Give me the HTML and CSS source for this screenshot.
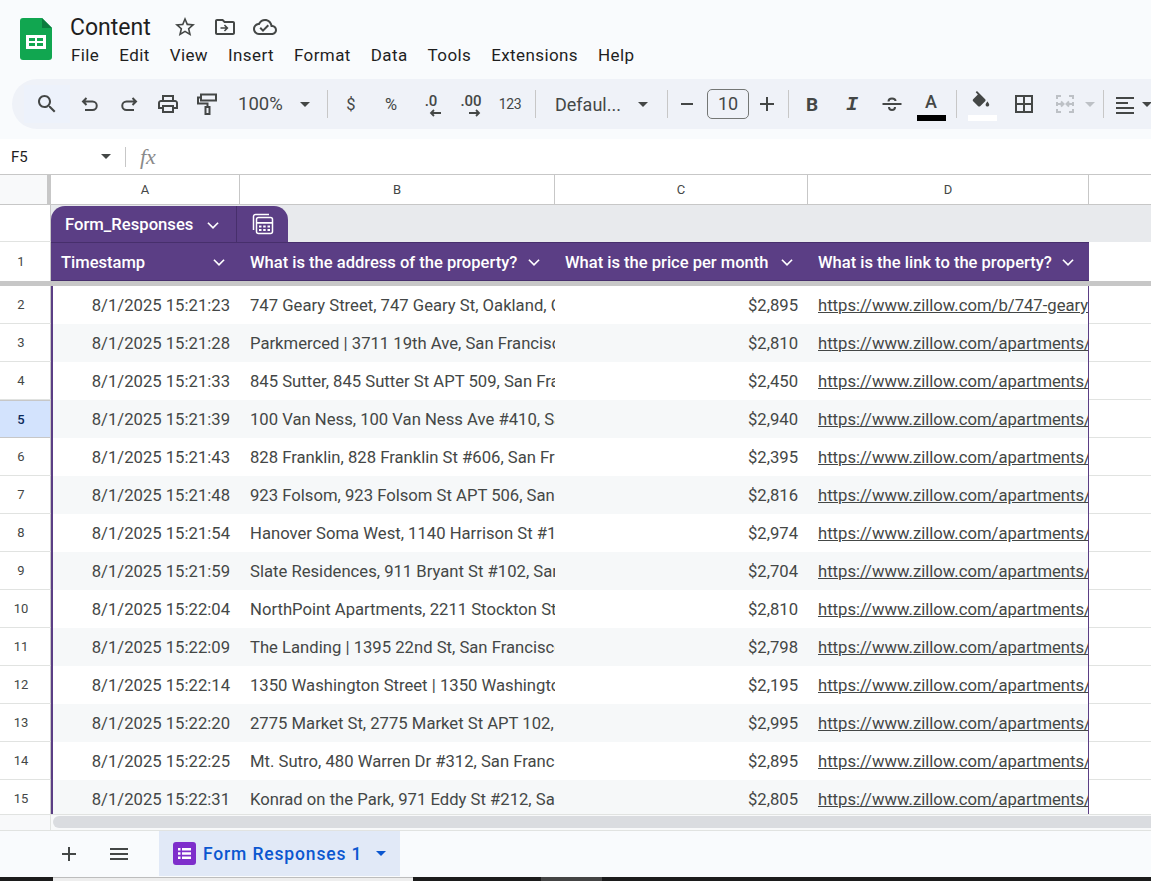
FILE: index.html
```html
<!DOCTYPE html>
<html>
<head>
<meta charset="utf-8" />
<title>Content - Google Sheets</title>
<link rel="stylesheet" href="styles.css">
</head>
<body>
<div class="app">

<div class="topbar">
	<svg class="logo" width="32" height="42" viewBox="0 0 32 42">
		<path d="M3 0h19l10 10v29a3 3 0 0 1-3 3H3a3 3 0 0 1-3-3V3a3 3 0 0 1 3-3z" fill="#11a650"/>
		<path d="M22 0l10 10H22z" fill="#0b7c3e"/>
		<path d="M6 17h20v14H6z" fill="#fff"/>
		<path d="M9 20h6v3H9zM17 20h6v3h-6zM9 25h6v3H9zM17 25h6v3h-6z" fill="#11a650"/>
	</svg>
	<div class="titles">
		<div class="title-row">
			<span class="doc-title">Content</span>
			<svg width="24" height="24" viewBox="0 0 24 24"><path d="M22 9.24l-7.19-.62L12 2 9.19 8.63 2 9.24l5.46 4.73L5.82 21 12 17.27 18.18 21l-1.63-7.03L22 9.24zM12 15.4l-3.76 2.27 1-4.28-3.32-2.88 4.38-.38L12 6.1l1.71 4.04 4.38.38-3.32 2.88 1 4.28L12 15.4z"/></svg>
			<svg class="title-icon" width="24" height="24" viewBox="0 0 24 24"><path d="M20 6h-8l-2-2H4c-1.1 0-2 .9-2 2v12c0 1.1.9 2 2 2h16c1.1 0 2-.9 2-2V8c0-1.1-.9-2-2-2zm0 12H4V6h5.17l2 2H20v10z"/><path d="M12 9.5l-1.1 1.1 1.6 1.6H7.5v1.6h5l-1.6 1.6L12 16.5l3.5-3.5z"/></svg>
			<svg class="title-icon" width="24" height="24" viewBox="0 0 24 24"><path d="M19.35 10.04C18.67 6.59 15.64 4 12 4 9.11 4 6.6 5.64 5.35 8.04 2.34 8.36 0 10.91 0 14c0 3.31 2.69 6 6 6h13c2.76 0 5-2.24 5-5 0-2.64-2.05-4.78-4.65-4.96zM19 18H6c-2.21 0-4-1.79-4-4 0-2.05 1.53-3.76 3.56-3.97l1.07-.11.5-.95C8.08 7.14 9.94 6 12 6c2.62 0 4.88 1.86 5.39 4.43l.3 1.5 1.53.11c1.56.1 2.78 1.41 2.78 2.96 0 1.65-1.35 3-3 3zm-9-3.82l-2.09-2.09L6.5 13.5 10 17l6.01-6.01-1.41-1.41z"/></svg>
		</div>
		<div class="menu">
			<span>File</span><span>Edit</span><span>View</span><span>Insert</span><span>Format</span><span>Data</span><span>Tools</span><span>Extensions</span><span>Help</span>
		</div>
	</div>
</div>

<div class="toolbar">
	<div class="tb search"><svg width="24" height="24" viewBox="0 0 24 24"><path d="M15.5 14h-.79l-.28-.27C15.41 12.59 16 11.11 16 9.5 16 5.91 13.09 3 9.5 3S3 5.91 3 9.5 5.91 16 9.5 16c1.61 0 3.09-.59 4.23-1.57l.27.28v.79l5 4.99L20.49 19l-4.99-5zm-6 0C7.01 14 5 11.99 5 9.5S7.01 5 9.5 5 14 7.01 14 9.5 11.99 14 9.5 14z"/></svg></div>
	<div class="tb"><svg class="line" width="24" height="24" viewBox="0 0 24 24"><path d="M8.5 6 5 9.5 8.5 13M5 9.5h9.5a4.25 4.25 0 0 1 0 8.5H7"/></svg></div>
	<div class="tb"><svg class="line" width="24" height="24" viewBox="0 0 24 24"><path d="M15.5 6 19 9.5 15.5 13M19 9.5H9.5a4.25 4.25 0 0 0 0 8.5H17"/></svg></div>
	<div class="tb"><svg width="24" height="24" viewBox="0 0 24 24"><path d="M19 8h-1V3H6v5H5c-1.66 0-3 1.34-3 3v6h4v4h12v-4h4v-6c0-1.66-1.34-3-3-3zM8 5h8v3H8V5zm8 12v2H8v-4h8v2zm2-2v-2H6v2H4v-4c0-.55.45-1 1-1h14c.55 0 1 .45 1 1v4h-2z"/></svg></div>
	<div class="tb"><svg class="line" width="24" height="24" viewBox="0 0 24 24"><rect x="6" y="2.5" width="15" height="6"/><path d="M6 5.5H3v6h9.5V15"/><rect x="10.5" y="15" width="4" height="7"/></svg></div>
	<div class="tb zoom"><span>100%</span><i class="caret"></i></div>
	<div class="sep sep-a"></div>
	<div class="tb txt">$</div>
	<div class="tb txt">%</div>
	<div class="tb dec"><b>.0</b><svg width="14" height="8" viewBox="0 0 14 8"><path d="M13 4H3M6 1 3 4l3 3"/></svg></div>
	<div class="tb dec"><b>.00</b><svg width="14" height="8" viewBox="0 0 14 8"><path d="M1 4h10M8 1l3 3-3 3"/></svg></div>
	<div class="tb txt small">123</div>
	<div class="sep sep-b"></div>
	<div class="tb font"><span>Defaul...</span><i class="caret"></i></div>
	<div class="sep sep-c"></div>
	<div class="tb size-btn"><svg width="24" height="24" viewBox="0 0 24 24"><path d="M6 11h12v2H6z"/></svg></div>
	<div class="size-box">10</div>
	<div class="tb size-btn"><svg width="24" height="24" viewBox="0 0 24 24"><path d="M11 5h2v6h6v2h-6v6h-2v-6H5v-2h6z"/></svg></div>
	<div class="sep sep-d"></div>
	<div class="tb fmt bold">B</div>
	<div class="tb fmt ital">I</div>
	<div class="tb"><svg class="line" width="24" height="24" viewBox="0 0 24 24"><path d="M2.5 12h19M8.5 9.500C8.500 7.500 10 6.500 12 6.500s3.500 1 3.500 2.500M9 15c0 2 1.200 3 3 3s3-1 3-3"/></svg></div>
	<div class="tb color"><span>A</span><i class="bar black"></i></div>
	<div class="sep sep-e"></div>
	<div class="tb color"><svg width="24" height="24" viewBox="0 0 24 24"><path d="M16.56 8.94 7.62 0 6.21 1.41l2.38 2.38-5.15 5.15c-.59.59-.59 1.54 0 2.12l5.5 5.5c.29.29.68.44 1.06.44s.77-.15 1.06-.44l5.5-5.5c.59-.58.59-1.53 0-2.12zM19 11.5s-2 2.17-2 3.5c0 1.1.9 2 2 2s2-.9 2-2c0-1.33-2-3.5-2-3.5z"/></svg><i class="bar white"></i></div>
	<div class="tb borders"><svg width="24" height="24" viewBox="0 0 24 24"><path d="M3 3v18h18V3H3zm8 16H5v-6h6v6zm0-8H5V5h6v6zm8 8h-6v-6h6v6zm0-8h-6V5h6v6z"/></svg></div>
	<div class="tb merge"><svg class="line off" width="24" height="24" viewBox="0 0 24 24"><path d="M8 4H4v3M4 10v4M4 17v3h4M16 4h4v3M20 10v4M20 17v3h-4M3 12h7M8 9.500l2.500 2.500L8 14.500M21 12h-7M16 9.500 13.500 12l2.500 2.500"/></svg></div>
	<i class="caret off"></i>
	<div class="sep sep-f"></div>
	<div class="tb align"><svg width="24" height="24" viewBox="0 0 24 24"><path d="M3 3h18v2H3zM3 8h12v2H3zM3 13h18v2H3zM3 18h18v2H3z"/></svg><i class="caret"></i></div>
</div>

<div class="formula">
	<span class="cell-ref">F5</span>
	<i class="caret"></i>
	<div class="formula-sep"></div>
	<span class="fx">fx</span>
</div>

<div class="sheet">
	<div class="row col-heads">
		<div class="corner"></div>
		<div class="col-head">A</div>
		<div class="col-head">B</div>
		<div class="col-head">C</div>
		<div class="col-head">D</div>
		<div class="col-head"></div>
	</div>
	<div class="tab-row">
		<div class="row-head"></div>
		<div class="band">
			<div class="table-tab">
				<div class="tab-name">Form_Responses <svg class="chev" width="18" height="18" viewBox="0 0 16 16"><path d="M3.5 6 8 10.5 12.5 6"/></svg></div>
				<div class="tab-icon"><svg width="24" height="24" viewBox="0 0 24 24"><path class="stroke" d="M2.5 18V4.500a2 2 0 0 1 2-2H18"/><rect class="stroke" x="5.500" y="5.500" width="16" height="16" rx="2"/><path d="M5.500 10h16v1.800h-16zM8 13.500h2.500v2H8zM12.200 13.500h2.500v2h-2.500zM16.500 13.500H19v2h-2.500zM8 17h2.500v2H8zM12.200 17h2.500v2h-2.500zM16.500 17H19v2h-2.500z"/></svg></div>
			</div>
		</div>
	</div>
	<div class="row head-row">
		<div class="row-head">1</div>
		<div class="th">Timestamp<svg class="chev" width="18" height="18" viewBox="0 0 16 16"><path d="M3.5 6 8 10.5 12.5 6"/></svg></div>
		<div class="th">What is the address of the property?<svg class="chev" width="18" height="18" viewBox="0 0 16 16"><path d="M3.5 6 8 10.5 12.5 6"/></svg></div>
		<div class="th">What is the price per month<svg class="chev" width="18" height="18" viewBox="0 0 16 16"><path d="M3.5 6 8 10.5 12.5 6"/></svg></div>
		<div class="th">What is the link to the property?<svg class="chev" width="18" height="18" viewBox="0 0 16 16"><path d="M3.5 6 8 10.5 12.5 6"/></svg></div>
		<div class="blank"></div>
	</div>
	<div class="freeze"></div>
	<div class="rows">
		<div class="row"><div class="row-head">2</div><div class="td date">8/1/2025 15:21:23</div><div class="td">747 Geary Street, 747 Geary St, Oakland, CA 94609</div><div class="td price">$2,895</div><div class="td link"><u>https://www.zillow.com/b/747-geary-street-oakland-ca/</u></div><div class="blank"></div></div>
		<div class="row alt"><div class="row-head">3</div><div class="td date">8/1/2025 15:21:28</div><div class="td">Parkmerced | 3711 19th Ave, San Francisco, CA 94132</div><div class="td price">$2,810</div><div class="td link"><u>https://www.zillow.com/apartments/san-francisco-ca/</u></div><div class="blank"></div></div>
		<div class="row"><div class="row-head">4</div><div class="td date">8/1/2025 15:21:33</div><div class="td">845 Sutter, 845 Sutter St APT 509, San Francisco, CA</div><div class="td price">$2,450</div><div class="td link"><u>https://www.zillow.com/apartments/san-francisco-ca/</u></div><div class="blank"></div></div>
		<div class="row alt"><div class="row-head picked">5</div><div class="td date">8/1/2025 15:21:39</div><div class="td">100 Van Ness, 100 Van Ness Ave #410, San Francisco</div><div class="td price">$2,940</div><div class="td link"><u>https://www.zillow.com/apartments/san-francisco-ca/</u></div><div class="blank"></div></div>
		<div class="row"><div class="row-head">6</div><div class="td date">8/1/2025 15:21:43</div><div class="td">828 Franklin, 828 Franklin St #606, San Francisco, CA</div><div class="td price">$2,395</div><div class="td link"><u>https://www.zillow.com/apartments/san-francisco-ca/</u></div><div class="blank"></div></div>
		<div class="row alt"><div class="row-head">7</div><div class="td date">8/1/2025 15:21:48</div><div class="td">923 Folsom, 923 Folsom St APT 506, San Francisco</div><div class="td price">$2,816</div><div class="td link"><u>https://www.zillow.com/apartments/san-francisco-ca/</u></div><div class="blank"></div></div>
		<div class="row"><div class="row-head">8</div><div class="td date">8/1/2025 15:21:54</div><div class="td">Hanover Soma West, 1140 Harrison St #103, San Francisco</div><div class="td price">$2,974</div><div class="td link"><u>https://www.zillow.com/apartments/san-francisco-ca/</u></div><div class="blank"></div></div>
		<div class="row alt"><div class="row-head">9</div><div class="td date">8/1/2025 15:21:59</div><div class="td">Slate Residences, 911 Bryant St #102, San Francisco</div><div class="td price">$2,704</div><div class="td link"><u>https://www.zillow.com/apartments/san-francisco-ca/</u></div><div class="blank"></div></div>
		<div class="row"><div class="row-head">10</div><div class="td date">8/1/2025 15:22:04</div><div class="td">NorthPoint Apartments, 2211 Stockton St, San Francisco</div><div class="td price">$2,810</div><div class="td link"><u>https://www.zillow.com/apartments/san-francisco-ca/</u></div><div class="blank"></div></div>
		<div class="row alt"><div class="row-head">11</div><div class="td date">8/1/2025 15:22:09</div><div class="td">The Landing | 1395 22nd St, San Francisco, CA 94107</div><div class="td price">$2,798</div><div class="td link"><u>https://www.zillow.com/apartments/san-francisco-ca/</u></div><div class="blank"></div></div>
		<div class="row"><div class="row-head">12</div><div class="td date">8/1/2025 15:22:14</div><div class="td">1350 Washington Street | 1350 Washington St, San Francisco</div><div class="td price">$2,195</div><div class="td link"><u>https://www.zillow.com/apartments/san-francisco-ca/</u></div><div class="blank"></div></div>
		<div class="row alt"><div class="row-head">13</div><div class="td date">8/1/2025 15:22:20</div><div class="td">2775 Market St, 2775 Market St APT 102, San Francisco</div><div class="td price">$2,995</div><div class="td link"><u>https://www.zillow.com/apartments/san-francisco-ca/</u></div><div class="blank"></div></div>
		<div class="row"><div class="row-head">14</div><div class="td date">8/1/2025 15:22:25</div><div class="td">Mt. Sutro, 480 Warren Dr #312, San Francisco, CA 94131</div><div class="td price">$2,895</div><div class="td link"><u>https://www.zillow.com/apartments/san-francisco-ca/</u></div><div class="blank"></div></div>
		<div class="row alt"><div class="row-head">15</div><div class="td date">8/1/2025 15:22:31</div><div class="td">Konrad on the Park, 971 Eddy St #212, San Francisco</div><div class="td price">$2,805</div><div class="td link"><u>https://www.zillow.com/apartments/san-francisco-ca/</u></div><div class="blank"></div></div>
	</div>
	<div class="scroll-row">
		<div class="scroll-corner"></div>
		<div class="scroll-track"><div class="scroll-thumb"></div></div>
	</div>
</div>

<div class="bottombar">
	<div class="bottom-btn add"><svg width="24" height="24" viewBox="0 0 24 24"><path d="M11 5h2v6h6v2h-6v6h-2v-6H5v-2h6z"/></svg></div>
	<div class="bottom-btn all"><svg width="24" height="24" viewBox="0 0 24 24"><path d="M3 6h18v2H3zM3 11h18v2H3zM3 16h18v2H3z"/></svg></div>
	<div class="sheet-tab">
		<svg width="23" height="23" viewBox="0 0 23 23"><rect width="23" height="23" rx="3" fill="#7e2ecb"/><path d="M5 6h2.500v2.500H5zM9 6h9v2.500H9zM5 10.300h2.500v2.500H5zM9 10.300h9v2.500H9zM5 14.600h2.500v2.500H5zM9 14.600h9v2.500H9z" fill="#fff"/></svg>
		<span>Form Responses 1</span>
		<i class="caret blue"></i>
	</div>
</div>

<div class="taskbar">
	<div class="task-a"></div>
	<div class="task-b"></div>
	<div class="task-c"></div>
	<div class="task-d"></div>
	<div class="task-e"></div>
</div>

</div>
</body>
</html>
```

FILE: styles.css
```css
* {
	box-sizing: border-box;
}

body {
	margin: 0;
	background-color: #f9fbfd;
	color: #444746;
	font-family: Roboto, "Liberation Sans", sans-serif;
	overflow: hidden;
}

.app {
	width: 1151px;
	height: 881px;
	display: flex;
	flex-direction: column;
	overflow: hidden;
}

svg {
	fill: #444746;
	flex: none;
}

.caret {
	display: block;
	flex: none;
	width: 0;
	height: 0;
	border-left: 5px solid transparent;
	border-right: 5px solid transparent;
	border-top: 5px solid #444746;
}

.caret.off {
	border-top-color: #bdc1c6;
}

.caret.blue {
	border-top-color: #0b57d0;
}

/* title and menu */

.topbar {
	height: 79px;
	display: flex;
	padding: 18px 0 0 20px;
}

.logo {
	margin-right: 18px;
}

.titles {
	display: flex;
	flex-direction: column;
}

.title-row {
	display: flex;
	align-items: center;
	height: 30px;
	margin-top: -6px;
}

.doc-title {
	font-size: 23px;
	color: #1f1f1f;
	width: 103px;
}

.title-icon {
	margin-left: 16px;
}

.menu {
	display: flex;
	gap: 20px;
	font-size: 17px;
	letter-spacing: 0.4px;
	color: #1f1f1f;
	margin: 1px 0 0 1px;
	line-height: 24px;
}

/* toolbar */

.toolbar {
	height: 50px;
	margin-left: 12px;
	padding-left: 12px;
	border-radius: 25px 0 0 25px;
	background-color: #eff2f8;
	display: flex;
	align-items: center;
	flex: none;
	white-space: nowrap;
}

.tb {
	width: 39px;
	height: 38px;
	flex: none;
	display: flex;
	align-items: center;
	justify-content: center;
	font-size: 15px;
}

.search {
	width: 46px;
	background-color: #edf2fb;
}

.zoom {
	width: 91px;
	font-size: 18.5px;
	justify-content: flex-start;
	padding-left: 12px;
}

.zoom .caret {
	margin-left: 17px;
}

.sep {
	width: 1px;
	height: 28px;
	flex: none;
	background-color: #c7c7c7;
}

.sep-a {
	margin: 0 3px 0 10px;
}

.txt {
	width: 40px;
	font-size: 16.5px;
}

.txt.small {
	font-size: 14px;
	width: 38px;
	letter-spacing: -0.3px;
}

.dec {
	width: 40px;
	flex-direction: column;
	align-items: center;
	font-size: 15px;
	line-height: 14px;
	padding-top: 3px;
}

.dec b {
	font-weight: 500;
}

.dec svg {
	fill: none;
	stroke: #444746;
	stroke-width: 1.8;
	margin: 1px 0 0 8px;
}

.sep-b {
	margin: 0 3px 0 6px;
}

.font {
	width: 116px;
	font-size: 18px;
	justify-content: flex-start;
	padding-left: 16px;
}

.font .caret {
	margin-left: 17px;
}

.sep-c {
	margin: 0 3px 0 12px;
}

.size-btn {
	width: 32px;
}

.size-box {
	width: 42px;
	height: 30px;
	flex: none;
	margin: 0 2px 0 4px;
	border: 1px solid #747775;
	border-radius: 5px;
	font-size: 18px;
	line-height: 28px;
	text-align: center;
}

.sep-d {
	margin: 0 3px 0 5px;
}

.fmt {
	width: 40px;
	font-size: 19px;
}

.bold {
	font-weight: 700;
}

.ital {
	font-family: "Liberation Mono", monospace;
	font-weight: 700;
	font-style: italic;
	font-size: 20px;
}

.line {
	fill: none;
	stroke: #444746;
	stroke-width: 2;
}

.line.off {
	stroke: #bdc1c6;
}

.color {
	width: 40px;
	flex-direction: column;
	position: relative;
}

.color span {
	margin-top: -6px;
	font-size: 18px;
	font-weight: 500;
}

.color svg {
	margin-top: -4px;
	width: 22px;
	height: 22px;
}

.bar {
	position: absolute;
	left: 6px;
	top: 30px;
	width: 29px;
	height: 6px;
}

.bar.black {
	background-color: #000;
}

.bar.white {
	left: 7px;
	background-color: #fff;
}

.sep-e {
	margin: 0 4px 0 5px;
}

.borders {
	width: 40px;
	margin-left: 3px;
}

.merge {
	width: 40px;
	margin-left: 1px;
}

.sep-f {
	margin: 0 3px 0 8px;
}

.align {
	width: 50px;
	justify-content: flex-start;
	padding-left: 6px;
}

.align svg {
	margin-top: 4px;
}

.align .caret {
	margin-left: 5px;
}

/* formula bar */

.formula {
	height: 46px;
	padding-top: 10px;
	flex: none;
	display: flex;
	align-items: center;
	background: linear-gradient(#f9fbfd 10px, #fff 10px);
	border-bottom: 1px solid #c7c7c7;
	color: #1f1f1f;
}

.cell-ref {
	width: 101px;
	padding-left: 11px;
	font-size: 15px;
}

.formula-sep {
	width: 1px;
	height: 20px;
	margin-left: 14px;
	background-color: #c7c7c7;
}

.fx {
	margin-left: 14px;
	font-family: "Liberation Serif", serif;
	font-style: italic;
	font-size: 22px;
	color: #8a8a8a;
}

/* grid */

.sheet {
	flex: 1;
	display: flex;
	flex-direction: column;
	min-height: 0;
	background-color: #fff;
}

.row {
	display: grid;
	grid-template-columns: 51px 189px 315px 253px 281px 62px;
	height: 38px;
	flex: none;
}

.col-heads {
	height: 30px;
	border-bottom: 1px solid #c7c7c7;
}

.corner {
	background-color: #f8f9fa;
	border-right: 4px solid #c7c7c7;
}

.col-head {
	border-right: 1px solid #c7c7c7;
	font-size: 13px;
	line-height: 29px;
	text-align: center;
	color: #444746;
}

.col-head:last-child {
	border-right: 0;
}

.tab-row {
	display: flex;
	height: 37px;
	flex: none;
}

.row-head {
	width: 51px;
	flex: none;
	display: flex;
	align-items: center;
	justify-content: center;
	padding-right: 8px;
	font-size: 13px;
	color: #444746;
	background-color: #fff;
	border-bottom: 1px solid #e1e3e1;
	border-right: 1px solid #c7c7c7;
}

.row-head.picked {
	background-color: #d3e3fd;
	color: #0b2a5b;
	font-weight: 500;
	border-bottom-color: #c7c7c7;
	border-top: 1px solid #c7c7c7;
}

.band {
	flex: 1;
	background-color: #e8eaed;
	padding-top: 1px;
}

.table-tab {
	display: inline-flex;
	height: 36px;
	width: 237px;
	background-color: #5b3e85;
	border-radius: 14px 14px 0 0;
	color: #fff;
	vertical-align: top;
}

.tab-name {
	width: 186px;
	padding: 1px 0 0 14px;
	font-size: 16.67px;
	font-weight: 500;
	display: flex;
	align-items: center;
	border-right: 1px solid #472f6c;
}

.tab-name .chev {
	margin-left: 11px;
}

.tab-icon {
	flex: 1;
	display: flex;
	align-items: center;
	justify-content: center;
}

.tab-icon svg {
	fill: #fff;
}

.tab-icon .stroke {
	fill: none;
	stroke: #fff;
	stroke-width: 1.5;
}

.chev {
	fill: none;
	stroke: #fff;
	stroke-width: 1.5;
}

.head-row {
	height: 39px;
}

.head-row .row-head {
	padding-bottom: 1px;
	border-bottom: 0;
}

.th {
	display: flex;
	align-items: center;
	justify-content: space-between;
	padding: 1px 12px 0 10px;
	background-color: #5b3e85;
	color: #fff;
	font-size: 16.55px;
	font-weight: 500;
	white-space: nowrap;
	border-top: 1px solid #472f6c;
	border-bottom: 1px solid #472f6c;
}

.blank {
	border-bottom: 1px solid #e1e3e1;
}

.head-row .blank {
	border-bottom: 0;
}

.freeze {
	height: 5px;
	flex: none;
	background-color: #c7c7c7;
}

.rows {
	height: 528px;
	flex: none;
	overflow: hidden;
}

.td {
	padding: 1px 0 0 10px;
	font-size: 16.67px;
	line-height: 38px;
	color: #444746;
	white-space: nowrap;
	overflow: hidden;
	background-color: #fff;
}

.row.alt .td {
	background-color: #f6f8f9;
}

.date,
.price {
	padding: 1px 10px 0 0;
	text-align: right;
}

.row .td:nth-child(2) {
	border-left: 2px solid #5b3e85;
}

.row .link {
	border-right: 1px solid #5b3e85;
}

/* scrollbar */

.scroll-row {
	height: 16px;
	flex: none;
	display: flex;
	background-color: #f8f9fa;
	border-top: 1px solid #e1e3e1;
}

.scroll-corner {
	width: 51px;
	border-right: 1px solid #e1e3e1;
}

.scroll-track {
	flex: 1;
	padding: 1px 0 0 2px;
}

.scroll-thumb {
	height: 12px;
	background-color: #dadce0;
	border-radius: 6px 0 0 6px;
}

/* sheet tabs */

.bottombar {
	height: 47px;
	flex: none;
	display: flex;
	align-items: center;
	background-color: #f9fbfd;
	border-top: 1px solid #e1e3e1;
}

.bottom-btn {
	display: flex;
	justify-content: center;
	width: 24px;
}

.add {
	margin-left: 57px;
}

.all {
	margin-left: 26px;
}

.sheet-tab {
	margin-left: 28px;
	width: 241px;
	height: 45px;
	align-self: flex-start;
	padding-left: 14px;
	display: flex;
	align-items: center;
	background-color: #e1e9f7;
	color: #0b57d0;
	font-size: 17.5px;
	font-weight: 500;
	letter-spacing: 0.85px;
}

.sheet-tab span {
	margin-left: 7px;
}

.sheet-tab .caret {
	margin-left: 14px;
}

/* bit of the desktop below the window */

.taskbar {
	height: 4px;
	flex: none;
	display: flex;
	background-color: #1c1c1c;
}

.task-a {
	width: 53px;
}

.task-b {
	width: 360px;
	background-color: #eeeeee;
	border-top: 1px solid #bdbdbd;
}

.task-c {
	width: 128px;
}

.task-d {
	width: 61px;
	background-color: #444444;
}

.task-e {
	flex: 1;
}
```
